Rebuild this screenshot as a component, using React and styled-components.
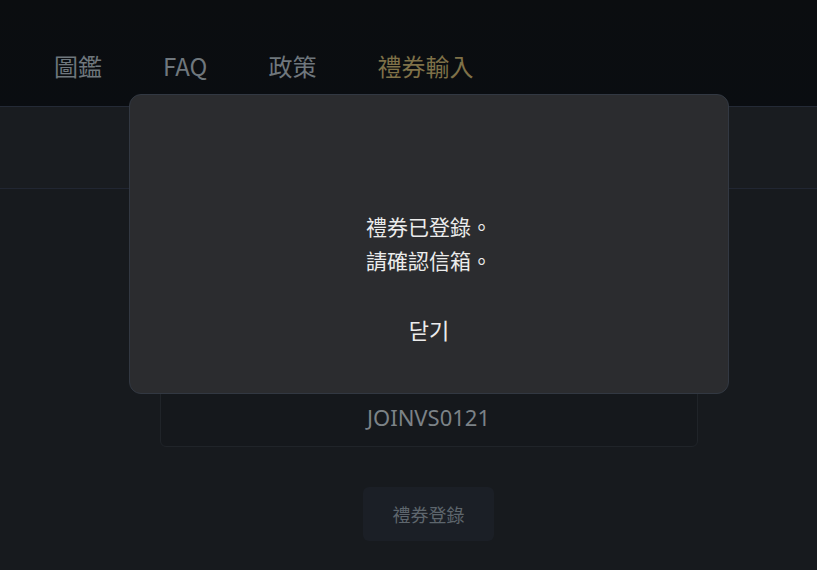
import React from 'react'
import { styled, createGlobalStyle } from 'styled-components'

const GlobalStyle = createGlobalStyle`
  html, body {
    margin: 0;
    padding: 0;
    background: #171a1e;
    font-family: "Noto Sans", "Noto Sans CJK TC", sans-serif;
  }
  * { box-sizing: border-box; }
`

const navItems = [
  { label: '圖鑑' },
  { label: 'FAQ' },
  { label: '政策' },
  { label: '禮券輸入', active: true },
]

export default function App() {
  return (
    <Page>
      <GlobalStyle />
      <Header>
        <Nav>
          {navItems.map((item) => (
            <NavItem key={item.label} $active={item.active}>
              {item.label}
            </NavItem>
          ))}
        </Nav>
      </Header>
      <Band />
      <Main>
        <CouponInput>JOINVS0121</CouponInput>
        <SubmitButton>禮券登錄</SubmitButton>
      </Main>

      <Modal>
        <Message>
          禮券已登錄。
          <br />
          請確認信箱。
        </Message>
        <CloseButton>닫기</CloseButton>
      </Modal>
    </Page>
  )
}

const Page = styled.div`
  position: relative;
  width: 817px;
  height: 570px;
  overflow: hidden;
  background: #171a1e;
`

const Header = styled.header`
  height: 107px;
  background: linear-gradient(180deg, #0b0d10 0%, #0a0d11 100%);
  border-bottom: 1px solid #242a36;
  display: flex;
  align-items: center;
  padding: 26px 0 0 54px;
`

const Nav = styled.nav`
  display: flex;
  gap: 61px;
`

const NavItem = styled.a`
  font-family: "Noto Sans CJK TC", "Noto Sans", sans-serif;
  font-size: 24px;
  line-height: 30px;
  color: ${(p) => (p.$active ? '#7f7148' : '#6f777d')};
  cursor: pointer;
`

const Band = styled.div`
  height: 82px;
  background: #191c20;
  border-bottom: 1px solid #212632;
`

const Main = styled.main`
  display: flex;
  flex-direction: column;
  align-items: center;
  padding: 198px 0 0 0;
  margin-left: 40px;
  gap: 40px;
`

const CouponInput = styled.div`
  width: 538px;
  height: 60px;
  border: 1px solid #202429;
  border-radius: 6px;
  background: #15181c;
  display: flex;
  align-items: center;
  justify-content: center;
  font-family: "Noto Sans", sans-serif;
  font-size: 22px;
  color: #7c8287;
`

const SubmitButton = styled.button`
  width: 131px;
  height: 54px;
  border: none;
  border-radius: 6px;
  background: #1b1f26;
  color: #5e666d;
  font-family: "Noto Sans CJK TC", sans-serif;
  font-size: 18px;
`

const Modal = styled.div`
  position: absolute;
  top: 94px;
  left: 129px;
  width: 600px;
  height: 300px;
  background: #2b2c2f;
  border: 1px solid #323842;
  border-radius: 12px;
  display: flex;
  flex-direction: column;
  align-items: center;
  padding-top: 114px;
`

const Message = styled.p`
  margin: 0;
  font-family: "Noto Sans CJK TC", sans-serif;
  font-size: 21px;
  line-height: 34px;
  color: #ececec;
  text-align: center;
`

const CloseButton = styled.button`
  margin-top: 37px;
  border: none;
  background: transparent;
  color: #ececec;
  font-family: "Noto Sans CJK KR", sans-serif;
  font-size: 22px;
  line-height: 30px;
  padding: 0;
  cursor: pointer;
`
